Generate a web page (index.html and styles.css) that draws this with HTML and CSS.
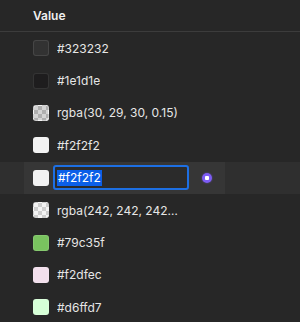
FILE: index.html
```html
<!DOCTYPE html>
<html lang="en">
<head>
    <meta charset="UTF-8">
    <title>Color Tokens</title>
    <link rel="stylesheet" href="styles.css">
</head>
<body>
    <div class="table">
        <div class="head">
            <span class="head-label">Value</span>
        </div>

        <div class="row">
            <div class="cell"><span class="swatch" style="background: #323232"></span><span class="value">#323232</span></div>
        </div>
        <div class="row">
            <div class="cell"><span class="swatch" style="background: #1e1d1e"></span><span class="value">#1e1d1e</span></div>
        </div>
        <div class="row">
            <div class="cell"><span class="swatch checker"><span class="tint" style="background: rgba(30, 29, 30, 0.15)"></span></span><span class="value">rgba(30, 29, 30, 0.15)</span></div>
        </div>
        <div class="row">
            <div class="cell"><span class="swatch" style="background: #f2f2f2"></span><span class="value">#f2f2f2</span></div>
        </div>
        <div class="row editing">
            <div class="cell">
                <span class="swatch" style="background: #f2f2f2"></span>
                <div class="input"><span class="selected">#f2f2f2</span></div>
                <span class="dot"></span>
            </div>
        </div>
        <div class="row">
            <div class="cell"><span class="swatch checker"><span class="tint" style="background: rgba(242, 242, 242, 0.15)"></span></span><span class="value">rgba(242, 242, 242, 0.15)</span></div>
        </div>
        <div class="row">
            <div class="cell"><span class="swatch" style="background: #79c35f"></span><span class="value">#79c35f</span></div>
        </div>
        <div class="row">
            <div class="cell"><span class="swatch" style="background: #f2dfec"></span><span class="value">#f2dfec</span></div>
        </div>
        <div class="row">
            <div class="cell"><span class="swatch" style="background: #d6ffd7"></span><span class="value">#d6ffd7</span></div>
        </div>
    </div>
</body>
</html>
```

FILE: styles.css
```css
* {
    margin: 0;
    padding: 0;
    box-sizing: border-box;
}

body {
    font-family: Inter, 'Noto Sans', sans-serif;
    font-size: 12px;
    color: #e6e6e6;
    background: #272727;
    overflow: hidden;
}

.head {
    height: 32px;
    display: flex;
    align-items: center;
    padding-left: 33px;
    border-bottom: 1px solid #3c3c3c;
}

.head-label {
    font-weight: 600;
    color: #f0f0f0;
}

.row {
    height: 32.4px;
    display: flex;
}

.cell {
    width: 201px;
    margin-left: 24px;
    padding-left: 9px;
    display: flex;
    align-items: center;
    gap: 8px;
}

.row.editing {
    background: #2f2f2f;
}

.row.editing .cell {
    background: #363636;
    gap: 4px;
}

.swatch {
    width: 16px;
    height: 16px;
    border-radius: 3px;
    border: 1px solid rgba(255, 255, 255, 0.1);
    flex-shrink: 0;
    overflow: hidden;
}

.checker {
    background-color: #f4f4f4;
    background-image:
        linear-gradient(45deg, #c8c8c8 25%, transparent 25%, transparent 75%, #c8c8c8 75%),
        linear-gradient(45deg, #c8c8c8 25%, transparent 25%, transparent 75%, #c8c8c8 75%);
    background-size: 8px 8px;
    background-position: 0 0, 4px 4px;
}

.tint {
    display: block;
    width: 100%;
    height: 100%;
}

.value {
    max-width: 122px;
    white-space: nowrap;
    overflow: hidden;
    text-overflow: ellipsis;
}

.input {
    width: 136px;
    height: 25px;
    border: 2px solid #1d6fe3;
    border-radius: 3px;
    background: #2b2b2b;
    display: flex;
    align-items: center;
    padding-left: 2px;
}

.selected {
    background: #0b5fe8;
    color: #ffffff;
    padding: 1px 1px;
    line-height: 14px;
}

.dot {
    width: 10px;
    height: 10px;
    border-radius: 50%;
    background: radial-gradient(circle, #ffffff 0 2px, #7d5cf5 2.5px);
    margin-left: 9px;
    box-shadow: 0 0 2px rgba(125, 92, 245, 0.6);
}
```
